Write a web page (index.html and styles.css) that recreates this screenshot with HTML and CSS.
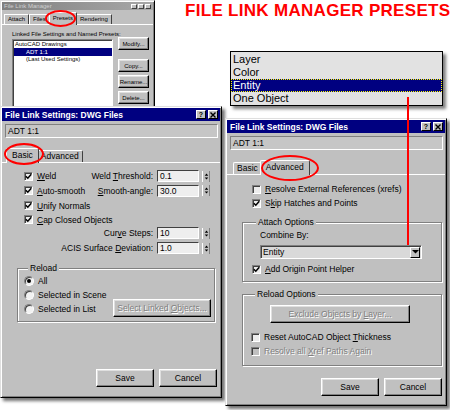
FILE: index.html
```html
<!DOCTYPE html>
<html>
<head>
<meta charset="utf-8">
<link rel="stylesheet" href="styles.css">
</head>
<body>
<div class="stage">
  <h1 class="headline">FILE LINK MANAGER PRESETS</h1>

  <div class="win mgr">
    <div class="mgr-title"><span>File Link Manager</span><span class="mgr-btns"><i></i><i></i><i></i></span></div>
    <div class="mgr-tabs"><span class="mtab">Attach</span><span class="mtab">Files</span><span class="mtab on">Presets</span><span class="mtab">Rendering</span></div>
    <div class="mgr-panel">
      <div class="mgr-label">Linked File Settings and Named Presets:</div>
      <div class="mgr-row">
        <div class="mgr-list">
          <div class="li">AutoCAD Drawings</div>
          <div class="li sub sel">ADT 1:1</div>
          <div class="li sub">(Last Used Settings)</div>
        </div>
        <div class="mgr-btncol">
          <span class="btn mbtn"><span>Modify...</span></span>
          <span class="btn mbtn copy"><span>Copy...</span></span>
          <span class="btn mbtn"><span>Rename...</span></span>
          <span class="btn mbtn"><span>Delete...</span></span>
        </div>
      </div>
    </div>
  </div>

  <div class="win dlg d1">
    <div class="titlebar"><span>File Link Settings: DWG Files</span><span class="tbtns"><i class="tb">?</i><i class="tb"><svg viewBox="0 0 6 6" width="6" height="6"><path d="M0.5 0.5 L5.5 5.5 M5.5 0.5 L0.5 5.5" stroke="#000" stroke-width="1.4"/></svg></i></span></div>
    <div class="field">ADT 1:1</div>
    <div class="tabs"><span class="tab on">Basic</span><span class="tab">Advanced</span></div>
    <div class="panel">
      <div class="rows rows1">
        <div class="r h14"><span class="ck"><b class="box"><svg viewBox="0 0 7 7"><path d="M0.8 3.2 L2.8 5.2 L6.3 1.2" stroke="#000" stroke-width="1.5" fill="none"/></svg></b><span><u>W</u>eld</span></span><span class="spin"><span>Weld <u>T</u>hreshold:</span><span class="num">0.1</span><span class="arr"><svg viewBox="0 0 8 11" width="8" height="11"><path d="M4 2 L6 4.5 L2 4.5Z M4 9 L6 6.5 L2 6.5Z" fill="#000"/></svg></span></span></div>
        <div class="r h15"><span class="ck"><b class="box"><svg viewBox="0 0 7 7"><path d="M0.8 3.2 L2.8 5.2 L6.3 1.2" stroke="#000" stroke-width="1.5" fill="none"/></svg></b><span><u>A</u>uto-smooth</span></span><span class="spin"><span><u>S</u>mooth-angle:</span><span class="num">30.0</span><span class="arr"><svg viewBox="0 0 8 11" width="8" height="11"><path d="M4 2 L6 4.5 L2 4.5Z M4 9 L6 6.5 L2 6.5Z" fill="#000"/></svg></span></span></div>
        <div class="r h15"><span class="ck"><b class="box"><svg viewBox="0 0 7 7"><path d="M0.8 3.2 L2.8 5.2 L6.3 1.2" stroke="#000" stroke-width="1.5" fill="none"/></svg></b><span><u>U</u>nify Normals</span></span></div>
        <div class="r h13"><span class="ck"><b class="box"><svg viewBox="0 0 7 7"><path d="M0.8 3.2 L2.8 5.2 L6.3 1.2" stroke="#000" stroke-width="1.5" fill="none"/></svg></b><span><u>C</u>ap Closed Objects</span></span></div>
        <div class="r h14 end"><span class="spin"><span>Cur<u>v</u>e Steps:</span><span class="num">10</span><span class="arr"><svg viewBox="0 0 8 11" width="8" height="11"><path d="M4 2 L6 4.5 L2 4.5Z M4 9 L6 6.5 L2 6.5Z" fill="#000"/></svg></span></span></div>
        <div class="r h16 end"><span class="spin"><span>ACIS Surface <u>D</u>eviation:</span><span class="num">1.0</span><span class="arr"><svg viewBox="0 0 8 11" width="8" height="11"><path d="M4 2 L6 4.5 L2 4.5Z M4 9 L6 6.5 L2 6.5Z" fill="#000"/></svg></span></span></div>
      </div>
      <fieldset class="grp reload1">
        <legend>Reload</legend>
        <div class="r h14"><span class="ck"><b class="radio on"></b><span>All</span></span></div>
        <div class="r h14"><span class="ck"><b class="radio"></b><span>Selected in Scene</span></span></div>
        <div class="r h14"><span class="ck"><b class="radio"></b><span>Selected in List</span></span><span class="btn dis sel-btn"><span>Select Linked <u>O</u>bjects...</span></span></div>
      </fieldset>
    </div>
    <div class="actions a1"><span class="btn act">Save</span><span class="btn act">Cancel</span></div>
  </div>

  <div class="win dlg d2">
    <div class="titlebar"><span>File Link Settings: DWG Files</span><span class="tbtns"><i class="tb">?</i><i class="tb"><svg viewBox="0 0 6 6" width="6" height="6"><path d="M0.5 0.5 L5.5 5.5 M5.5 0.5 L0.5 5.5" stroke="#000" stroke-width="1.4"/></svg></i></span></div>
    <div class="field">ADT 1:1</div>
    <div class="tabs"><span class="tab">Basic</span><span class="tab on">Advanced</span></div>
    <div class="panel">
      <div class="rows rows2">
        <div class="r h14"><span class="ck"><b class="box"></b><span><u>R</u>esolve External References (xrefs)</span></span></div>
        <div class="r h14"><span class="ck"><b class="box"><svg viewBox="0 0 7 7"><path d="M0.8 3.2 L2.8 5.2 L6.3 1.2" stroke="#000" stroke-width="1.5" fill="none"/></svg></b><span>S<u>k</u>ip Hatches and Points</span></span></div>
      </div>
      <fieldset class="grp attach">
        <legend>Attach Options</legend>
        <div class="combo-label">Combine By:</div>
        <div class="combo"><span>Entity</span><span class="combo-arr"><svg viewBox="0 0 7 4" width="7" height="4"><path d="M0 0 L7 0 L3.5 3.5Z" fill="#000"/></svg></span></div>
        <div class="r h14 mt3"><span class="ck"><b class="box"><svg viewBox="0 0 7 7"><path d="M0.8 3.2 L2.8 5.2 L6.3 1.2" stroke="#000" stroke-width="1.5" fill="none"/></svg></b><span><u>A</u>dd Origin Point Helper</span></span></div>
      </fieldset>
      <fieldset class="grp reload2">
        <legend>Reload Options</legend>
        <span class="btn dis excl"><span>Exclude Objects by <u>L</u>ayer...</span></span>
        <div class="r h14 mt7"><span class="ck"><b class="box"></b><span>Reset AutoCAD Object <u>T</u>hickness</span></span></div>
        <div class="r h14"><span class="ck dis-t"><b class="box off"></b><span>Resolve all <u>X</u>ref Paths Again</span></span></div>
      </fieldset>
    </div>
    <div class="actions a2"><span class="btn act">Save</span><span class="btn act">Cancel</span></div>
  </div>

  <div class="popup">
    <div class="opt">Layer</div>
    <div class="opt">Color</div>
    <div class="opt sel">Entity</div>
    <div class="opt">One Object</div>
  </div>

  <div class="ring ring-presets"></div>
  <div class="ring ring-basic"></div>
  <div class="ring ring-adv"></div>
  <div class="pointer"></div>
</div>
</body>
</html>
```

FILE: styles.css
```css
* { box-sizing: border-box; margin: 0; padding: 0; }
html, body { width: 450px; height: 410px; background: #fff; overflow: hidden; }
body { font-family: "Liberation Sans", Arial, sans-serif; font-size: 8.5px; color: #000; }
.stage { position: relative; width: 450px; height: 410px; }

.headline {
  position: absolute; left: 185px; top: 1px;
  font-size: 17px; font-weight: bold; line-height: 19px; letter-spacing: 0.3px;
  color: #ff0000; white-space: nowrap;
}

/* generic window */
.win {
  position: absolute;
  background: #c0c0c0;
  border: 1px solid;
  border-color: #dfdfdf #000 #000 #dfdfdf;
  box-shadow: inset 1px 1px #fff, inset -1px -1px #808080;
  padding: 1px;
}
.dlg {
  display: flex; flex-direction: column;
  box-shadow: inset 1px 1px #fff, inset -1px -1px #808080, 3px 3px 3px rgba(0,0,0,.55);
}
.d1 { left: 0; top: 106px; width: 222px; height: 292px; z-index: 2; }
.d2 { left: 225px; top: 118px; width: 222px; height: 288px; z-index: 3; }

.btn {
  display: flex; align-items: center; justify-content: center;
  background: #c0c0c0;
  border: 1px solid;
  border-color: #fff #000 #000 #fff;
  box-shadow: inset -1px -1px #808080, inset 1px 1px #dfdfdf;
  white-space: nowrap;
}
.btn.dis { color: #808080; text-shadow: 1px 1px #fff; }

/* File Link Manager (small) */
.mgr { left: 0; top: 0; width: 155px; height: 112px; z-index: 1; font-size: 6px; }
.mgr-title {
  height: 8px; display: flex; align-items: center; justify-content: space-between;
  background: linear-gradient(90deg, #808080, #a8a8a8);
  color: #d0d0d0; padding: 0 2px; line-height: 8px;
}
.mgr-btns { display: flex; gap: 1px; }
.mgr-btns i {
  display: block; width: 6px; height: 5px; background: #c0c0c0;
  border: 1px solid; border-color: #fff #404040 #404040 #fff;
}
.mgr-tabs { display: flex; align-items: flex-end; height: 12px; margin-top: 2px; padding-left: 2px; }
.mtab {
  height: 10px; line-height: 9px; padding: 0 3px;
  border: 1px solid; border-bottom: none; border-color: #fff #404040 #fff #fff;
}
.mtab.on { height: 13px; margin: 0 -1px -1px; padding: 1px 3px 0; background: #c0c0c0; position: relative; }
.mgr-panel { border-top: 1px solid #fff; padding: 5px 4px 0 10px; }
.mgr-label { line-height: 8px; height: 8px; }
.mgr-row { display: flex; justify-content: space-between; margin-top: 1px; }
.mgr-list {
  width: 101px; height: 70px; background: #fff;
  border: 1px solid; border-color: #808080 #fff #fff #808080;
  box-shadow: inset 1px 1px #404040; padding: 1px 0 0 1px;
}
.li { height: 7px; line-height: 7px; padding-left: 1px; white-space: nowrap; }
.li.sub { padding-left: 12px; }
.li.sel { background: #000080; color: #fff; height: 8px; line-height: 8px; }
.mgr-btncol { width: 31px; display: flex; flex-direction: column; gap: 3px; margin-top: -2px; }
.mbtn { height: 13px; font-size: 6px; }
.mbtn.copy { margin-top: 6px; }

/* dialogs */
.titlebar {
  height: 13px; flex: none;
  background: #000080; color: #fff; font-weight: bold; font-size: 8.5px;
  display: flex; align-items: center; justify-content: space-between;
  padding: 0 2px 0 3px; white-space: nowrap;
}
.tbtns { display: flex; gap: 2px; }
.tb {
  width: 10px; height: 9px; display: flex; align-items: center; justify-content: center;
  background: #c0c0c0; color: #000; font-style: normal; font-size: 7px; font-weight: bold;
  border: 1px solid; border-color: #fff #000 #000 #fff;
}
.field {
  flex: none; margin: 3px 2px 0 3px; height: 14px; line-height: 12px; padding-left: 2px;
  border: 1px solid; border-color: #808080 #fff #fff #808080;
  background: #c6c6c6;
}
.tabs { flex: none; display: flex; align-items: flex-end; height: 14px; margin-top: 10px; padding-left: 6px; }
.tab {
  height: 12px; line-height: 11px; padding: 0 3px;
  border: 1px solid; border-bottom: none; border-color: #fff #404040 #fff #fff;
  border-radius: 2px 2px 0 0; white-space: nowrap;
}
.tab.on {
  height: 15px; line-height: 13px; margin: 0 -2px -1px; padding: 0 5px;
  background: #c0c0c0; position: relative; z-index: 1;
}
.panel { flex: none; border-top: 1px solid #fff; }
.rows1 { padding: 6px 10px 0 22px; }
.rows2 { padding: 7px 10px 0 25px; }

.r { display: flex; align-items: center; justify-content: space-between; white-space: nowrap; }
.r.end { justify-content: flex-end; }
.h13 { height: 13px; } .h14 { height: 14px; } .h15 { height: 15px; } .h16 { height: 16px; }
.mt3 { margin-top: 3px; } .mt7 { margin-top: 7px; }
.ck { display: flex; align-items: center; gap: 4px; }
.ck.dis-t { color: #808080; text-shadow: 1px 1px #fff; }
.box {
  width: 9px; height: 9px; flex: none; display: flex; align-items: center; justify-content: center;
  background: #ececec;
  border: 1px solid; border-color: #808080 #fff #fff #808080;
  box-shadow: inset 1px 1px #404040;
}
.box svg { width: 7px; height: 7px; }
.box.off { background: #c0c0c0; }
.radio {
  width: 10px; height: 10px; flex: none; border-radius: 50%;
  background: #f2f2f2;
  border: 1px solid; border-color: #808080 #fff #fff #808080;
  box-shadow: inset 1px 1px #404040;
  display: flex; align-items: center; justify-content: center;
}
.radio.on::after { content: ""; width: 4px; height: 4px; border-radius: 50%; background: #000; }

.spin { display: flex; align-items: center; gap: 3px; }
.num {
  width: 42px; height: 12px; line-height: 10px; padding-left: 2px; margin-left: 1px;
  background: #eeeeee;
  border: 1px solid; border-color: #404040 #fff #fff #404040;
}
.arr {
  width: 8px; height: 11px; display: block;
  background: #c0c0c0;
  border-left: 1px solid #fff; border-right: 1px solid #808080;
}
.arr svg { display: block; width: 7px; }

.grp {
  border: 1px solid #808080;
  box-shadow: inset 1px 1px #fff, 1px 1px #fff;
  min-width: 0;
}
.grp legend {
  line-height: 9px; margin-left: 4px; padding: 0 2px; background: #c0c0c0;
}
.reload1 { margin: 8px 5px 0 15px; padding: 1px 3px 5px 6px; }
.sel-btn { width: 98px; height: 18px; margin: -3px 0 -1px; }

.attach { margin: 8px 3px 0 15px; padding: 2px 8px 5px 9px; }
.combo-label { height: 13px; line-height: 13px; margin-left: 8px; }
.combo {
  margin: 3px 0 0 8px; width: 162px; height: 14px;
  display: flex; align-items: center; justify-content: space-between; padding-left: 2px;
  background: #d9d9d9;
  border: 1px solid; border-color: #808080 #fff #fff #808080;
  box-shadow: inset 1px 1px #404040;
}
.combo-arr {
  width: 10px; height: 11px; margin-right: 1px;
  display: flex; align-items: center; justify-content: center;
  background: #c0c0c0;
  border: 1px solid; border-color: #fff #000 #000 #fff;
}
.reload2 { margin: 8px 3px 0 15px; padding: 6px 8px 7px 8px; }
.excl { width: 140px; height: 18px; margin-left: 19px; }

.actions { flex: none; display: flex; justify-content: flex-end; gap: 5px; padding-right: 3px; }
.a1 { margin-top: 47px; }
.a2 { margin-top: 12px; }
.act { width: 58px; height: 18px; }

/* dropdown popup */
.popup {
  position: absolute; left: 230px; top: 51px; width: 213px; height: 55px; z-index: 4;
  background: #e2e2e2; border: 1px solid #000;
  box-shadow: 3px 3px 3px rgba(0,0,0,.5);
  padding-top: 1px; font-size: 11px;
}
.opt { height: 13px; line-height: 12px; padding-left: 2px; }
.opt.sel { background: #000080; color: #fff; border: 1px dotted #ffff00; padding-left: 1px; line-height: 10px; }

/* annotations */
.ring { position: absolute; border: 2px solid #ff0000; border-radius: 50%; z-index: 6; }
.ring-presets { left: 45px; top: 10px; width: 31px; height: 17px; }
.ring-basic { left: 4px; top: 143px; width: 40px; height: 22px; }
.ring-adv { left: 261px; top: 155px; width: 58px; height: 26px; }
.pointer { position: absolute; left: 407px; top: 97px; width: 2px; height: 148px; background: #ff0000; z-index: 7; }
```
